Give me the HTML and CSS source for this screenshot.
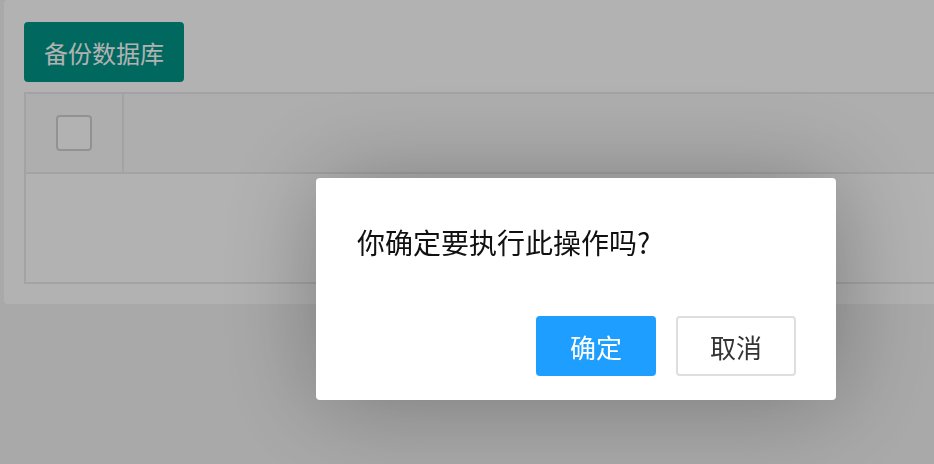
FILE: index.html
```html
<!DOCTYPE html>
<html lang="zh-CN">
<head>
  <meta charset="UTF-8">
  <title>备份数据库</title>
  <link rel="stylesheet" href="styles.css">
</head>
<body>

  <div class="page">
    <div class="card">
      <button class="btn-green">备份数据库</button>

      <table class="data-table">
        <thead>
          <tr>
            <th class="check-col"><span class="checkbox"></span></th>
            <th></th>
          </tr>
        </thead>
        <tbody>
          <tr>
            <td colspan="2" class="empty"></td>
          </tr>
        </tbody>
      </table>
    </div>
  </div>

  <div class="shade"></div>

  <div class="dialog">
    <div class="dialog-content">你确定要执行此操作吗?</div>
    <div class="dialog-btns">
      <button class="btn-ok">确定</button>
      <button class="btn-cancel">取消</button>
    </div>
  </div>

</body>
</html>
```

FILE: styles.css
```css
html, body {
  margin: 0;
  height: 100%;
  overflow: hidden;
}

body {
  font-family: "Noto Sans CJK SC", "Noto Sans", sans-serif;
  background-color: #f2f2f2;
  color: #333;
}

.page {
  padding-left: 4px;
  margin-right: -40px;
}

.card {
  background-color: #fff;
  border-radius: 4px;
  padding: 22px 20px 20px 20px;
}

.btn-green {
  display: block;
  width: 160px;
  height: 60px;
  border: none;
  border-radius: 4px;
  background-color: #009688;
  color: #fff;
  font-family: inherit;
  font-size: 24px;
  padding: 0;
}

.data-table {
  width: 100%;
  margin-top: 10px;
  border-collapse: collapse;
  border: 2px solid #eaeaee;
}

.data-table th {
  height: 78px;
  background-color: #fafafa;
  border: 2px solid #eaeaee;
  padding: 0;
}

.check-col {
  width: 96px;
}

.checkbox {
  display: inline-block;
  width: 32px;
  height: 32px;
  border: 2px solid #d2d2d2;
  border-radius: 4px;
  background-color: #fff;
  vertical-align: middle;
}

.empty {
  height: 108px;
  padding: 0;
}

.shade {
  position: fixed;
  left: 0;
  top: 0;
  right: 0;
  bottom: 0;
  background-color: rgba(0, 0, 0, 0.3);
}

.dialog {
  position: fixed;
  left: 316px;
  top: 178px;
  width: 520px;
  height: 222px;
  background-color: #fff;
  border-radius: 4px;
  box-shadow: 2px 2px 100px rgba(0, 0, 0, 0.3);
}

.dialog-content {
  padding: 40px 40px 40px 41px;
  line-height: 48px;
  font-size: 28px;
  color: #111;
}

.dialog-btns {
  display: flex;
  justify-content: flex-end;
  gap: 20px;
  padding: 0 40px;
  margin-top: 10px;
}

.dialog-btns button {
  width: 120px;
  height: 60px;
  border-radius: 4px;
  font-family: inherit;
  font-size: 26px;
  padding: 0;
}

.btn-ok {
  background-color: #1e9fff;
  border: 2px solid #1e9fff;
  color: #fff;
}

.btn-cancel {
  background-color: #fff;
  border: 2px solid #dedede;
  color: #333;
}
```
